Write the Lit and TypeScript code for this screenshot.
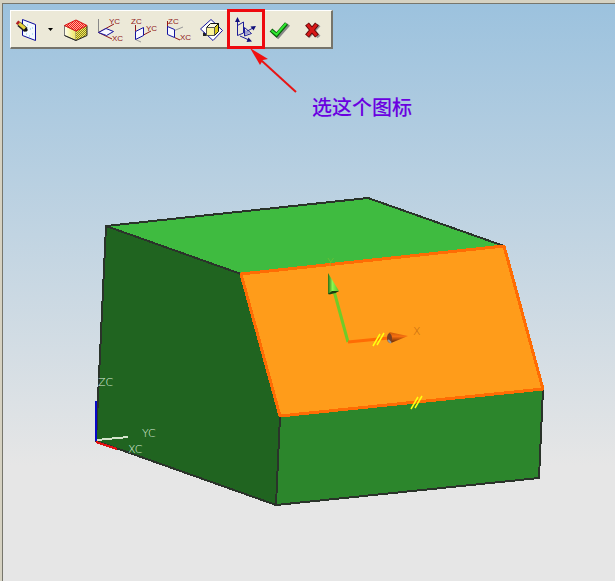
import { LitElement, html, svg, css } from "lit";
import { customElement } from "lit/decorators.js";

const pencil = svg`
  <path d="M11.5 8.5 24.5 13.5V29.5L11.5 24.5Z" fill="#f4faff" stroke="#0a0a9a"/>
  <path d="M15 23h1m3-5h1m-2 7h1m2-2h1m-1-6h1m-6-3h1" stroke="#7cc4e8"/>
  <path d="M8 13 15 19" stroke="#222" stroke-width="5"/>
  <path d="M8 12.5 14 17.5" stroke="#e6d23c" stroke-width="3"/>
  <path d="M6 11 8 12.5" stroke="#b02020" stroke-width="4"/>
  <path d="M14 18 16 20" stroke="#111" stroke-width="3"/>`;

const block = svg`
  <defs>
    <pattern id="red" width="2" height="2" patternUnits="userSpaceOnUse">
      <rect width="2" height="2" fill="#f01818"/><path d="M0 0h1v1H0zM1 1h1v1H1z" fill="#ffb0a0"/>
    </pattern>
    <pattern id="olive" width="2" height="2" patternUnits="userSpaceOnUse">
      <rect width="2" height="2" fill="#f4ec5c"/><path d="M0 0h1v1H0zM1 1h1v1H1z" fill="#8c8420"/>
    </pattern>
    <linearGradient id="pale"><stop offset="0" stop-color="#fffff0"/><stop offset="1" stop-color="#f0e860"/></linearGradient>
  </defs>
  <path d="M6.5 14.5 18 20V29.5L6.5 24.5Z" fill="url(#pale)" stroke="#777"/>
  <path d="M18 20 29 14.5V24.5L18 29.5Z" fill="url(#olive)"/>
  <path d="M29 14.5V24.5L18 29.5 6.5 24.5" fill="none" stroke="#222"/>
  <path d="M18 9 29 14.5 18 20 6.5 14.5Z" fill="url(#red)" stroke="#d81010"/>`;

const planeXY = svg`
  <path d="M6.5 8V21" stroke="#888"/>
  <path d="M6.5 21.5 22 13M6.5 21.5 20 28" stroke="#901818"/>
  <path d="M6.5 21.5 14 17.5 21.5 20.5 14.5 24.5Z" fill="#f8f8ff" stroke="#1414a0"/>
  <text x="17" y="13">YC</text><text x="20" y="30">XC</text>`;

const planeYZ = svg`
  <path d="M9.5 28.5 15 31" stroke="#999"/>
  <path d="M9.5 14V28M17.5 24 25 20" stroke="#901818"/>
  <path d="M9.5 20.5 17.5 16.5V24.5L9.5 28.5Z" fill="#f8f8ff" stroke="#1414a0"/>
  <text x="5" y="13">ZC</text><text x="20" y="20">YC</text>`;

const planeXZ = svg`
  <path d="M14.5 19.5 23 16" stroke="#999"/>
  <path d="M7.5 10V16M14.5 26.5 20 29" stroke="#901818"/>
  <path d="M7.5 15.5 14.5 18.5V26.5L7.5 23.5Z" fill="#f8f8ff" stroke="#1414a0"/>
  <text x="8" y="13">ZC</text><text x="20" y="29">XC</text>`;

const facePlane = svg`
  <path d="M9 25V22L13 18V25Z" fill="#222"/>
  <path d="M17 8.5 28.5 19.5 19 29.5 6.5 18Z" fill="#fff" stroke="#1414a0"/>
  <path d="M12.5 16.500 16.5 12.5H24.5L20.5 16.5Z" fill="#fffbe0" stroke="#111"/>
  <path d="M20.5 16.5 24.5 12.5V20.5L20.5 24.5Z" fill="#d8c818" stroke="#111"/>
  <path d="M12.5 16.5H20.5V24.5H12.5Z" fill="#fcf49c" stroke="#555"/>`;

const orient = svg`
  <path d="M9.500 10V24.500M9.500 14.500 15.500 11V22L9.500 24.500M16.500 16.500V25L23.500 22.500ZM16.500 21.500 25 17M12 25 21 29" fill="none" stroke="#1c1c98"/>
  <path d="M17 19 22 22 17 24Z" fill="#9c9cd0"/>
  <path d="M9.500 6 12 11H7ZM28 15 25.500 19.500 22.500 15.500ZM24 30.500 18.500 31 20.500 26.500Z" fill="#10107c"/>`;

const check = svg`
  <path d="M11 21 16 25.500 26.500 13.500" fill="none" stroke="#888" stroke-width="4"/>
  <path d="M9 19 14.500 24 24.500 12.500" fill="none" stroke="#086008" stroke-width="4"/>
  <path d="M9.500 19.500 14.500 23.500 24 12.500" fill="none" stroke="#30e830" stroke-width="2"/>`;

const cross = svg`
  <path d="M12 14 23 26M23 14 12 26" stroke="#999" stroke-width="4"/>
  <path d="M11 13 21 25M21 13 11 25" stroke="#600808" stroke-width="5"/>
  <path d="M11.500 13.500 20.500 24.500M20.500 13.500 11.500 24.500" stroke="#d81818" stroke-width="3"/>`;

const tools = [
  { name: "Face of solid", icon: block },
  { name: "XC-YC plane", icon: planeXY },
  { name: "YC-ZC plane", icon: planeYZ },
  { name: "ZC-XC plane", icon: planeXZ },
  { name: "Datum plane", icon: facePlane },
  { name: "Sketch orientation", icon: orient, marked: true },
  { name: "OK", icon: check },
  { name: "Cancel", icon: cross },
];

@customElement("sketch-toolbar")
export class SketchToolbar extends LitElement {
  static styles = css`
    :host {
      display: flex;
      background: #ece9d8;
      border: solid;
      border-width: 1px 2px 2px 1px;
      border-color: #fff #76746a #76746a #fff;
    }
    button {
      display: block;
      width: 34px;
      height: 36px;
      padding: 0;
      border: 0;
      background: none;
    }
    .drop { width: 14px; }
    .marked { outline: 3px solid #ee0a0f; outline-offset: -1px; }
    svg { display: block; width: 100%; height: 100%; }
    text { font: 8px "Liberation Sans", sans-serif; fill: #901818; }
  `;

  render() {
    return html`
      <button aria-label="Sketch"><svg viewBox="0 0 34 36">${pencil}</svg></button>
      <button class="drop" aria-label="Sketch options">
        <svg viewBox="0 0 14 36"><path d="M3 17h5l-2.500 3z" fill="#000"/></svg>
      </button>
      ${tools.map(
        (t) => html`<button class=${t.marked ? "marked" : ""} aria-label=${t.name}>
          <svg viewBox="1 0 34 36">${t.icon}</svg>
        </button>`
      )}
    `;
  }
}

@customElement("model-view")
export class ModelView extends LitElement {
  static styles = css`
    :host { display: block; }
    svg { display: block; width: 100%; height: auto; }
    .edge { fill: none; stroke: #2a332a; stroke-width: 2; stroke-linejoin: round; }
    .solid { shape-rendering: crispEdges; }
    .axis { font: 11px "DejaVu Sans", sans-serif; font-weight: 200; fill: #dcecdc; }
    .note { font: 500 20px "Noto Sans CJK SC", sans-serif; fill: #6a00e0; }
    .axis.x { fill: #c46a10; }
    .axis.y { fill: #7cc030; }
  `;

  render() {
    return html`
      <svg viewBox="3 4 612 577" role="img" aria-label="Solid model">
        <defs>
          <linearGradient id="gcone"><stop offset="0" stop-color="#2c7014"/><stop offset=".4" stop-color="#8cf850"/><stop offset="1" stop-color="#58c028"/></linearGradient>
          <linearGradient id="ocone" x2="0" y2="1"><stop offset="0" stop-color="#c85808"/><stop offset=".4" stop-color="#f87010"/><stop offset="1" stop-color="#5c2400"/></linearGradient>
        </defs>
        <g class="solid">
          <path d="M106 226 368 198 504 246 241 274Z" fill="#3fbb40"/>
          <path d="M106 226 241 274 280 416 276 505 96 441Z" fill="#206420"/>
          <path d="M280 416 543 389 539 478 276 505Z" fill="#2c862c"/>
          <path class="edge" d="M241 274 106 226 368 198 504 246M106 226 96 441 276 505 539 478 543 389M280 416 276 505"/>
          <path d="M241 274 504 246 543 389 280 416Z" fill="#ff9c1a" stroke="#ff6c04" stroke-width="3" stroke-linejoin="round"/>
          <path d="M96 441V401" stroke="#0808c8" stroke-width="2"/>
          <path d="M97 440 128 437" stroke="#d4e4cc" stroke-width="2"/>
          <path d="M96 442 117 449" stroke="#e01010" stroke-width="2"/>
        </g>

        <text class="axis" x="98" y="386">ZC</text>
        <text class="axis" x="142" y="437">YC</text>
        <text class="axis" x="128" y="453">XC</text>

        <path d="M348 342 334 291" stroke="#70cc28" stroke-width="3"/>
        <path d="M328 273 339 291Q333 295 328 294Z" fill="url(#gcone)"/>
        <path d="M328 294 332 291 339 291Q334 295 328 294Z" fill="#1c3c10"/>
        <path d="M348 342 389 338" stroke="#ff6c04" stroke-width="3"/>
        <ellipse cx="390" cy="338" rx="3" ry="5" fill="#7c4020"/>
        <path d="M389 332 408 336 391 343Q394 337 389 332Z" fill="url(#ocone)"/>
        <path d="M388 340 391 343" stroke="#999" stroke-width="2"/>
        <path d="M373 346 380 334M377 345 384 333M411 409 418 397M415 408 422 396" stroke="#ffff10" stroke-width="1.5"/>
        <text class="axis x" x="413" y="335">X</text>
        <text class="axis y" x="327" y="266">Y</text>

        <path d="M296 92 262 61" stroke="#e81414" stroke-width="2"/>
        <path d="M250 48 268 59 263 60 260 65Z" fill="#f01010"/>
        <text class="note" x="312" y="115">选这个图标</text>
      </svg>
    `;
  }
}

@customElement("app-root")
export class AppRoot extends LitElement {
  static styles = css`
    :host {
      display: flex;
      box-sizing: border-box;
      min-height: 100vh;
      padding: 3px 0 0 2px;
      background: #d6d2c2;
    }
    .viewport {
      position: relative;
      flex: 1;
      border: solid #77766c;
      border-width: 1px 0 0 1px;
      background: linear-gradient(#9cc2de, #e6e6e6 80%);
    }
    sketch-toolbar { position: absolute; left: 7px; top: 6px; }
  `;

  render() {
    return html`
      <main class="viewport">
        <model-view></model-view>
        <sketch-toolbar></sketch-toolbar>
      </main>
    `;
  }
}
